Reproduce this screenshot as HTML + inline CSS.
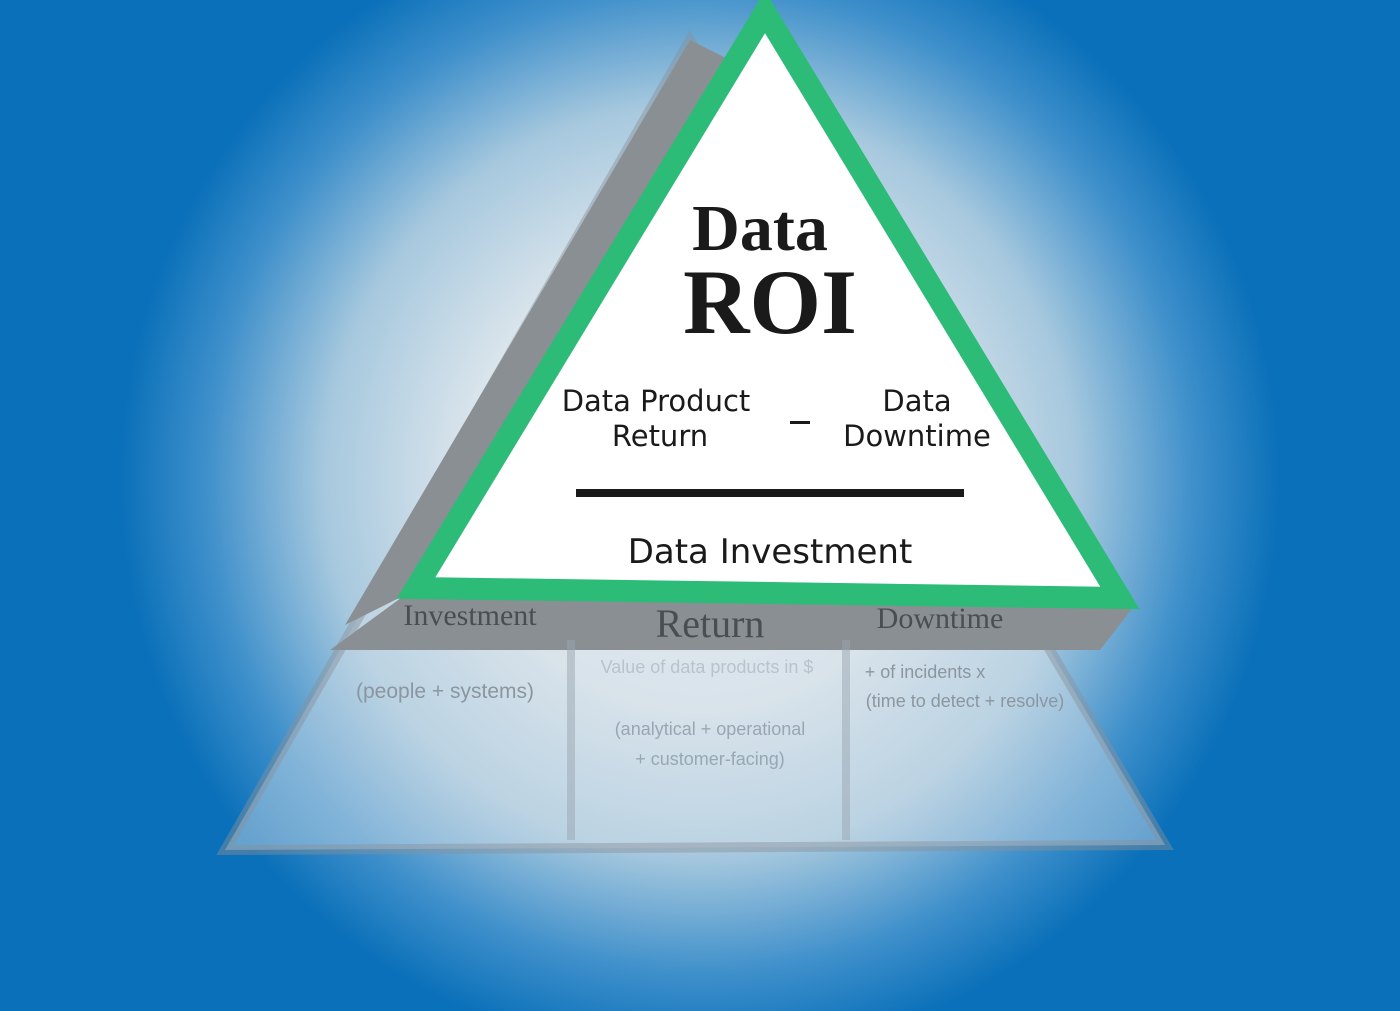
<!DOCTYPE html>
<html><head><style>html,body{margin:0;padding:0;width:1400px;height:1011px;overflow:hidden;background:#0a70b9}</style></head>
<body>
<svg width="1400" height="1011" viewBox="0 0 1400 1011" xmlns="http://www.w3.org/2000/svg">
<defs>
<radialGradient id="g" cx="700" cy="480" r="580" gradientUnits="userSpaceOnUse">
<stop offset="0" stop-color="#f6f8fa"/>
<stop offset="0.4" stop-color="#dbe5ec"/>
<stop offset="0.65" stop-color="#a6c8de"/>
<stop offset="0.85" stop-color="#3f90cb"/>
<stop offset="1" stop-color="#0a70b9"/>
</radialGradient>
</defs>
<rect width="1400" height="1011" fill="#0a70b9"/>
<rect width="1400" height="1011" fill="url(#g)"/>
<polygon points="690,40 1165,845 225,850" fill="#d4e0e8" opacity="0.45"/>
<polygon points="690,40 1165,845 225,850" fill="none" stroke="#8a9199" stroke-width="10" opacity="0.45"/>
<polygon points="405,595 1135,605 1100,650 330,650" fill="#8a8f93"/>
<polygon points="690,40 730,60 405,595 345,625" fill="#8a8f93"/>
<rect x="567" y="640" width="8" height="200" fill="#9aa6b0" opacity="0.5"/>
<rect x="842" y="640" width="8" height="200" fill="#9aa6b0" opacity="0.5"/>
<g font-family="Liberation Serif, serif" fill="#3a3f44" opacity="0.8">
<text x="470" y="625" font-size="30" text-anchor="middle">Investment</text>
<text x="710" y="637" font-size="40" text-anchor="middle">Return</text>
<text x="940" y="628" font-size="30" text-anchor="middle">Downtime</text>
</g>
<g font-family="Liberation Sans, sans-serif" fill="#8b969f" font-size="18">
<text x="445" y="698" font-size="21" text-anchor="middle">(people + systems)</text>
<text x="707" y="673" text-anchor="middle" fill="#b8c3cc">Value of data products in $</text>
<text x="925" y="678" text-anchor="middle">+ of incidents x</text>
<text x="965" y="707" text-anchor="middle">(time to detect + resolve)</text>
<text x="710" y="735" text-anchor="middle" fill="#97a7b4">(analytical + operational</text>
<text x="710" y="765" text-anchor="middle" fill="#97a7b4">+ customer-facing)</text>
</g>
<polygon points="765,12 416,588 1120,598" fill="#ffffff" stroke="#2dbb78" stroke-width="22" stroke-linejoin="miter"/>
<g fill="#1a1a1a">
<text x="760" y="250" font-family="Liberation Serif, serif" font-weight="bold" font-size="66" text-anchor="middle">Data</text>
<text x="770" y="333" font-family="Liberation Serif, serif" font-weight="bold" font-size="92" text-anchor="middle">ROI</text>
<g font-family="DejaVu Sans, sans-serif" font-size="29">
<text x="656" y="411" text-anchor="middle">Data Product</text>
<text x="660" y="446" text-anchor="middle">Return</text>
<text x="917" y="411" text-anchor="middle">Data</text>
<text x="917" y="446" text-anchor="middle">Downtime</text>
<text x="770" y="563" text-anchor="middle" font-size="34">Data Investment</text>
</g>
<rect x="790" y="421" width="20" height="3"/>
<rect x="576" y="489" width="388" height="8"/>
</g>
</svg>
</body></html>
